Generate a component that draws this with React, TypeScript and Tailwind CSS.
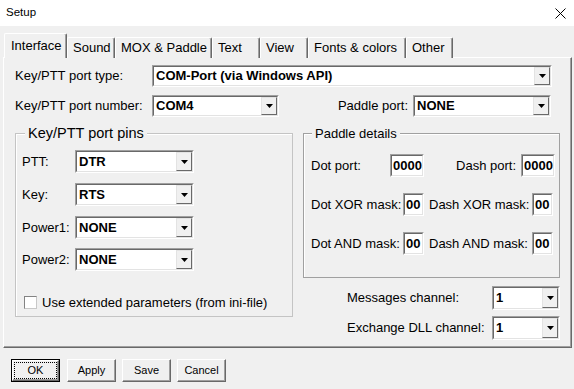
import React from 'react';

const TABS = [
  { label: 'Interface', w: 'w-[63px]', active: true },
  { label: 'Sound', w: 'w-[48px]' },
  { label: 'MOX & Paddle', w: 'w-[97px]' },
  { label: 'Text', w: 'w-[48px]' },
  { label: 'View', w: 'w-[48px]' },
  { label: 'Fonts & colors', w: 'w-[98px]' },
  { label: 'Other', w: 'w-[47px]' },
];

const Arrow = () => (
  <svg width="7" height="4" viewBox="0 0 7 4">
    <path d="M0 0h7L3.5 4z" fill="#000" />
  </svg>
);

// sunken combo box with the classic drop button
const Combo = ({ value, className = '' }: { value: string; className?: string }) => (
  <div className={`flex shrink-0 border border-t-[#a0a0a0] border-l-[#a0a0a0] border-r-white border-b-white ${className}`}>
    <div className="flex min-w-0 flex-1 border border-t-[#696969] border-l-[#696969] border-r-[#e3e3e3] border-b-[#e3e3e3] bg-white">
      <span className="flex flex-1 items-center overflow-hidden whitespace-nowrap pl-[2px] font-bold">{value}</span>
      <span className="flex w-[16px] shrink-0 items-center justify-center border border-t-[#e3e3e3] border-l-[#e3e3e3] border-r-[#696969] border-b-[#696969] bg-[#f0f0f0]">
        <Arrow />
      </span>
    </div>
  </div>
);

const Edit = ({ value, className = '' }: { value: string; className?: string }) => (
  <div className={`flex shrink-0 border border-t-[#a0a0a0] border-l-[#a0a0a0] border-r-white border-b-white ${className}`}>
    <div className="flex flex-1 items-center border border-t-[#696969] border-l-[#696969] border-r-[#e3e3e3] border-b-[#e3e3e3] bg-white pl-[1px] font-bold">
      {value}
    </div>
  </div>
);

const Button = ({ label, isDefault }: { label: string; isDefault?: boolean }) => (
  <div className={`h-[23px] w-[49px] ${isDefault ? 'border border-black' : ''}`}>
    <div className="flex h-full items-center justify-center border border-t-white border-l-white border-r-[#696969] border-b-[#696969] bg-[#f0f0f0] p-[1px] shadow-[inset_-1px_-1px_0_#a0a0a0]">
      <div className={`flex h-full w-full items-center justify-center ${isDefault ? 'border border-dotted border-black' : ''}`}>
        {label}
      </div>
    </div>
  </div>
);

const PinRow = ({ label, value, className = '' }: { label: string; value: string; className?: string }) => (
  <div className={`flex items-center ${className}`}>
    <span className="w-[53px] whitespace-nowrap">{label}</span>
    <Combo value={value} className="h-[23px] w-[119px]" />
  </div>
);

export default function App() {
  return (
    <div className="h-[389px] w-[574px] overflow-hidden bg-[#f0f0f0] font-['Liberation_Sans',Arial,sans-serif] text-[13px] text-black">
      {/* title bar */}
      <div className="flex h-[26px] items-center justify-between bg-white pl-[6px] pr-[8px]">
        <span className="text-[11.5px]">Setup</span>
        <svg width="11" height="11" viewBox="0 0 11 11">
          <path d="M0.5 0.5l10 10M10.5 0.5l-10 10" stroke="#000" strokeWidth="1" />
        </svg>
      </div>

      {/* tabs */}
      <div className="relative z-10 mb-[-1px] ml-[4px] mt-[7px] flex h-[25px] items-end">
        {TABS.map((t) => (
          <div
            key={t.label}
            className={`${t.w} flex items-center whitespace-nowrap rounded-t-[2px] border-l border-t border-r border-l-white border-t-white border-r-[#696969] bg-[#f0f0f0] shadow-[inset_-1px_0_0_#a0a0a0] ${
              t.active ? 'h-[25px] pb-[1px] pl-[6px]' : 'h-[21px] pl-[5px]'
            }`}
          >
            {t.label}
          </div>
        ))}
      </div>

      {/* tab page */}
      <div className="ml-[3px] h-[291px] w-[569px] border border-l-white border-t-white border-r-[#696969] border-b-[#696969] pl-[11px] pt-[7px] shadow-[inset_-1px_-1px_0_#a0a0a0]">
        <div className="flex h-[22px] items-center">
          <span className="w-[137px]">Key/PTT port type:</span>
          <Combo value="COM-Port (via Windows API)" className="h-[22px] w-[400px]" />
        </div>

        <div className="mt-[8px] flex h-[22px] items-center">
          <span className="w-[137px]">Key/PTT port number:</span>
          <Combo value="COM4" className="h-[22px] w-[127px]" />
          <span className="w-[134px] pr-[5px] text-right">Paddle port:</span>
          <Combo value="NONE" className="h-[22px] w-[138px]" />
        </div>

        <div className="mt-[16px] flex gap-[10px]">
          {/* Key/PTT port pins */}
          <div className="relative h-[184px] w-[278px] border border-[#c4c4c4] pl-[6px] pt-[16px] shadow-[inset_1px_1px_0_#fff]">
            <span className="absolute left-[9px] top-[-9px] bg-[#f0f0f0] px-[3px] text-[14.5px] leading-[17px]">Key/PTT port pins</span>
            <PinRow label="PTT:" value="DTR" />
            <PinRow label="Key:" value="RTS" className="mt-[10px]" />
            <PinRow label="Power1:" value="NONE" className="mt-[10px]" />
            <PinRow label="Power2:" value="NONE" className="mt-[9px]" />
            <div className="ml-[2px] mt-[22px] flex items-center gap-[5px]">
              <span className="h-[13px] w-[13px] border border-t-[#838383] border-l-[#838383] border-r-[#c8c8c8] border-b-[#c8c8c8] bg-white" />
              <span>Use extended parameters (from ini-file)</span>
            </div>
          </div>

          <div className="flex w-[257px] flex-col">
            {/* Paddle details */}
            <div className="relative h-[145px] border border-[#a0a0a0] pl-[7px] pt-[20px] shadow-[inset_1px_1px_0_#fff]">
              <span className="absolute left-[8px] top-[-8px] bg-[#f0f0f0] px-[3px] leading-[15px]">Paddle details</span>
              <div className="flex items-center">
                <span className="w-[79px]">Dot port:</span>
                <Edit value="0000" className="h-[23px] w-[34px]" />
                <span className="w-[97px] pr-[5px] text-right">Dash port:</span>
                <Edit value="0000" className="h-[23px] w-[34px]" />
              </div>
              <div className="mt-[16px] flex items-center">
                <span className="w-[92px] whitespace-nowrap">Dot XOR mask:</span>
                <Edit value="00" className="h-[23px] w-[21px]" />
                <span className="w-[108px] whitespace-nowrap pl-[5px]">Dash XOR mask:</span>
                <Edit value="00" className="h-[23px] w-[21px]" />
              </div>
              <div className="mt-[16px] flex items-center">
                <span className="w-[92px] whitespace-nowrap">Dot AND mask:</span>
                <Edit value="00" className="h-[23px] w-[21px]" />
                <span className="w-[108px] whitespace-nowrap pl-[5px]">Dash AND mask:</span>
                <Edit value="00" className="h-[23px] w-[21px]" />
              </div>
            </div>

            <div className="mt-[8px] flex items-center pl-[44px]">
              <span className="w-[145px]">Messages channel:</span>
              <Combo value="1" className="h-[24px] w-[68px]" />
            </div>
            <div className="mt-[6px] flex items-center pl-[44px]">
              <span className="w-[145px] whitespace-nowrap">Exchange DLL channel:</span>
              <Combo value="1" className="h-[24px] w-[68px]" />
            </div>
          </div>
        </div>
      </div>

      {/* dialog buttons */}
      <div className="ml-[11px] mt-[11px] flex gap-[6px] text-[11px]">
        <Button label="OK" isDefault />
        <div className="ml-[1px]">
          <Button label="Apply" />
        </div>
        <Button label="Save" />
        <Button label="Cancel" />
      </div>
    </div>
  );
}
